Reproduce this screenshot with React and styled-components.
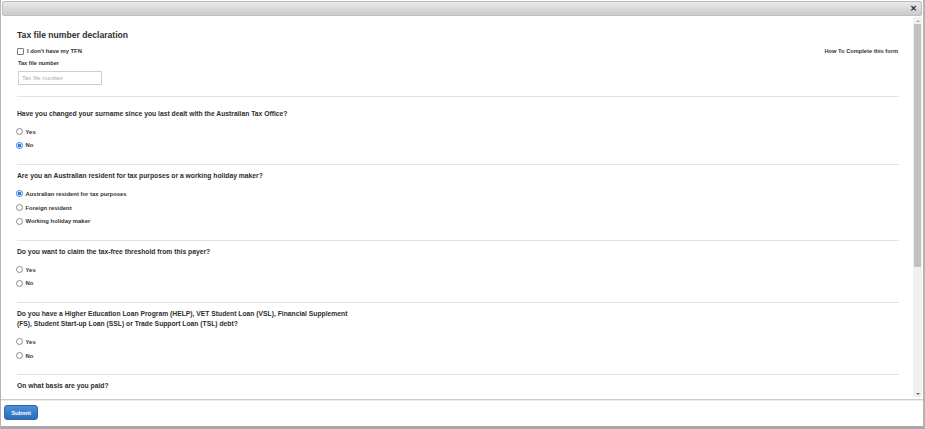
import React from "react";
import styled, { createGlobalStyle } from "styled-components";

const Global = createGlobalStyle`
  html, body { margin: 0; padding: 0; background: #fff; }
  body { font-family: "Liberation Sans", Arial, sans-serif; color: #333; }
  * { box-sizing: border-box; }
`;

const Window = styled.div`
  width: 925px;
  height: 429px;
  display: flex;
  flex-direction: column;
  background: #fff;
  border-left: 1px solid #b4b4b4;
  border-right: 2px solid #b4b4b4;
  border-bottom: 3px solid #a9a9a9;
`;

const TitleBar = styled.div`
  height: 15px;
  margin: 1px 1px 0 1px;
  border: 1px solid #bdbdbd;
  border-radius: 2px;
  background: linear-gradient(#e9e9e9, #cbcbcb);
  display: flex;
  align-items: center;
  justify-content: flex-end;
  padding-right: 3px;
`;

const Close = styled.button`
  border: 0;
  background: transparent;
  padding: 0;
  width: 9px;
  height: 9px;
  font: bold 9px/9px "DejaVu Sans", sans-serif;
  color: #222;
  cursor: pointer;
`;

const Body = styled.div`
  flex: 1;
  display: flex;
  min-height: 0;
`;

const Content = styled.div`
  flex: 1;
  overflow: hidden;
  padding: 13px 14px 0 16px;
`;

const Scrollbar = styled.div`
  width: 9px;
  margin: 1px 1px 2px 0;
  background: #f0f0f0;
  display: flex;
  flex-direction: column;
  align-items: stretch;
`;

const Arrow = styled.div`
  height: 7px;
  display: flex;
  align-items: center;
  justify-content: center;
  &::after {
    content: "";
    border-left: 2px solid transparent;
    border-right: 2px solid transparent;
    ${(p) =>
      p.$down
        ? "border-top: 2px solid #666;"
        : "border-bottom: 2px solid #aaa;"}
  }
`;

const Thumb = styled.div`
  height: 243px;
  margin: 0 1px;
  background: #c1c1c1;
`;

const Spacer = styled.div`
  flex: 1;
`;

const Title = styled.h1`
  margin: 0;
  font-size: 8.6px;
  line-height: 12px;
  font-weight: bold;
  color: #2e2e2e;
`;

const HeaderRow = styled.div`
  display: flex;
  justify-content: space-between;
  align-items: center;
  margin-top: 6px;
  height: 8px;
`;

const SmallLabel = styled.label`
  display: flex;
  align-items: center;
  gap: 3px;
  font-size: 5.8px;
  font-weight: bold;
  color: #333;
`;

const Check = styled.input.attrs({ type: "checkbox" })`
  appearance: none;
  margin: 0;
  width: 7px;
  height: 7px;
  border: 1px solid #7a7a7a;
  border-radius: 1px;
  background: #fff;
`;

const HelpLink = styled.a`
  font-size: 5.7px;
  font-weight: bold;
  color: #333;
  text-decoration: none;
  margin-right: 1px;
`;

const FieldLabel = styled.div`
  margin: 4px 0 0 1px;
  font-size: 5.6px;
  line-height: 8px;
  font-weight: bold;
`;

const TextInput = styled.input`
  display: block;
  margin: 4px 0 0 1px;
  width: 84px;
  height: 14px;
  border: 1px solid #cfcfcf;
  padding: 0 3px;
  font-family: "Liberation Sans", Arial, sans-serif;
  font-size: 6px;
  color: #333;
  &::placeholder { color: #aaa; }
`;

const Section = styled.section`
  border-top: 1px solid #e3e3e3;
  margin-top: ${(p) => (p.$first ? "11px" : "0")};
  padding: ${(p) => (p.$first ? "12px" : "6px")} 0 12px 0;
`;

const Question = styled.div`
  max-width: 336px;
  font-size: 6.75px;
  line-height: 10px;
  font-weight: bold;
  color: #2e2e2e;
`;

const Options = styled.div`
  margin-top: 6px;
  display: flex;
  flex-direction: column;
`;

const Option = styled.label`
  height: 13.6px;
  display: flex;
  align-items: center;
  gap: 2.5px;
  font-size: 5.9px;
  font-weight: bold;
  color: #333;
`;

const Radio = styled.input.attrs({ type: "radio" })`
  appearance: none;
  margin: 0 0 0 -1px;
  width: 7px;
  height: 7px;
  border-radius: 50%;
  border: 1px solid #8a8a8a;
  background: #fff;
  &:checked {
    border-color: #2f7be0;
    background: radial-gradient(circle, #2f7be0 0 1.6px, #fff 2.1px);
  }
`;

const Footer = styled.div`
  height: 27px;
  border-top: 1px solid #cccccc;
  box-shadow: inset 0 1px 0 #ececec;
  display: flex;
  align-items: center;
  padding: 0 0 1px 3px;
`;

const SubmitButton = styled.button`
  width: 34px;
  height: 15px;
  border: 1px solid #2c67ad;
  border-radius: 3px;
  background: linear-gradient(#4d8ed8, #2c6cbb);
  color: #fff;
  font-family: "Liberation Sans", Arial, sans-serif;
  font-size: 5.8px;
  font-weight: bold;
  padding: 0;
`;

const questions = [
  {
    q: "Have you changed your surname since you last dealt with the Australian Tax Office?",
    name: "surname",
    options: ["Yes", "No"],
    checked: "No",
  },
  {
    q: "Are you an Australian resident for tax purposes or a working holiday maker?",
    name: "resident",
    options: [
      "Australian resident for tax purposes",
      "Foreign resident",
      "Working holiday maker",
    ],
    checked: "Australian resident for tax purposes",
  },
  {
    q: "Do you want to claim the tax-free threshold from this payer?",
    name: "threshold",
    options: ["Yes", "No"],
  },
  {
    q: "Do you have a Higher Education Loan Program (HELP), VET Student Loan (VSL), Financial Supplement (FS), Student Start-up Loan (SSL) or Trade Support Loan (TSL) debt?",
    name: "loan",
    options: ["Yes", "No"],
  },
  {
    q: "On what basis are you paid?",
    name: "basis",
    options: [],
  },
];

export default function App() {
  return (
    <>
      <Global />
      <Window>
        <TitleBar>
          <Close aria-label="close">×</Close>
        </TitleBar>
        <Body>
          <Content>
            <Title>Tax file number declaration</Title>
            <HeaderRow>
              <SmallLabel>
                <Check />I don't have my TFN
              </SmallLabel>
              <HelpLink href="#">How To Complete this form</HelpLink>
            </HeaderRow>
            <FieldLabel>Tax file number</FieldLabel>
            <TextInput placeholder="Tax file number" />
            {questions.map((item, i) => (
              <Section key={item.name} $first={i === 0}>
                <Question>{item.q}</Question>
                {item.options.length > 0 && (
                  <Options>
                    {item.options.map((o) => (
                      <Option key={o}>
                        <Radio
                          name={item.name}
                          defaultChecked={item.checked === o}
                        />
                        {o}
                      </Option>
                    ))}
                  </Options>
                )}
              </Section>
            ))}
          </Content>
          <Scrollbar>
            <Arrow />
            <Thumb />
            <Spacer />
            <Arrow $down />
          </Scrollbar>
        </Body>
        <Footer>
          <SubmitButton>Submit</SubmitButton>
        </Footer>
      </Window>
    </>
  );
}
